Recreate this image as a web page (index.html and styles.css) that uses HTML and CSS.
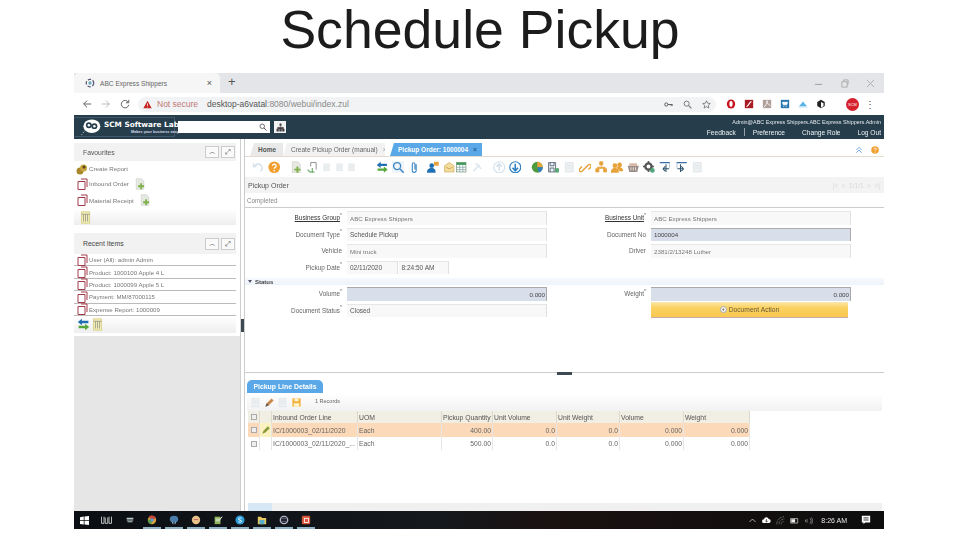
FILE: index.html
```html
<!DOCTYPE html>
<html lang="en">
<head>
<meta charset="utf-8">
<title>Schedule Pickup</title>
<link rel="stylesheet" href="styles.css">
</head>
<body>
<svg class="defs" aria-hidden="true">
  <symbol id="rdoc" viewBox="0 0 12 12"><path d="M2 3.500h7M2 3.500v8h7v-8M5 1h6v8" fill="none" stroke="#a33a4a" stroke-width="1"/></symbol>
  <symbol id="adoc" viewBox="0 0 16 16"><path d="M3 1h7l3 3v11H3z" fill="#e6e9e2" stroke="#cfd3cb"/><path d="M9.500 7v8M5.500 11h8" stroke="#7fb04a" stroke-width="2.400"/></symbol>
  <symbol id="grid" viewBox="0 0 16 16"><path d="M3 1h10v14H3z" fill="#f1edb8" stroke="#d8cf7a"/><path d="M5.500 4v9M8 4v9M10.500 4v9M3 4h10" stroke="#8f8f80" stroke-width=".9"/></symbol>
  <symbol id="sync" viewBox="0 0 16 16"><path d="M1 5l5-4v2.500h8v3H6V9z" fill="#1f6fb2"/><path d="M15 11l-5 4v-2.500H2v-3h8V7z" fill="#55a83a"/></symbol>
  <symbol id="mag" viewBox="0 0 16 16"><circle cx="6.500" cy="6.500" r="4.500" fill="none" stroke="currentColor" stroke-width="1.700"/><path d="M10 10l5 5" stroke="currentColor" stroke-width="2"/></symbol>
  <symbol id="help" viewBox="0 0 16 16"><circle cx="8" cy="8" r="7.500" fill="#f0a030"/><path d="M5.800 6.200a2.300 2.300 0 1 1 3.400 2c-.9.5-1.200.9-1.200 1.800M8 11.500v1.800" fill="none" stroke="#fff" stroke-width="1.600"/></symbol>
  <symbol id="faded" viewBox="0 0 16 16"><path d="M3 2h10v12H3z" fill="#eef1f3" stroke="#dde2e6"/><path d="M5 6h6M5 9h6" stroke="#dde2e6"/></symbol>
  <symbol id="arrow" viewBox="0 0 16 16"><circle cx="8" cy="8" r="7" fill="#fff" stroke="currentColor" stroke-width="1.500"/><path d="M8 3.500v9M4.500 8.500L8 12.500l3.500-4" fill="none" stroke="currentColor" stroke-width="2"/></symbol>
  <symbol id="people" viewBox="0 0 16 16"><circle cx="5" cy="6" r="3" fill="#e8a23a"/><circle cx="11" cy="5" r="3" fill="#e8a23a"/><path d="M0 15c0-5 2-6 5-6s5 1 5 6zM7 8c2-1.500 8-1 9 5h-5z" fill="#e8a23a"/></symbol>
  <symbol id="inout" viewBox="0 0 16 16"><path d="M1 2h13" stroke="#3a6ea8" stroke-width="1.500"/><path d="M13.500 2v7" stroke="#9fb7cf"/><path d="M9 4v10M5 10h8M5 10l3-3M5 10l3 3" fill="none" stroke="#33566f" stroke-width="1.300"/></symbol>
</svg>

<main class="slide">
  <h1 class="slide-title">Schedule Pickup</h1>

  <section class="screen">
    <div class="tabstrip">
      <div class="browser-tab">
        <svg class="fav" viewBox="0 0 12 12"><circle cx="6" cy="6" r="4.500" fill="none" stroke="#557" stroke-width="1.500" stroke-dasharray="4 2"/><circle cx="6" cy="6" r="2" fill="#6ab"/></svg>
        <span class="browser-tab-title">ABC Express Shippers</span>
        <span class="browser-tab-x">×</span>
      </div>
      <span class="new-tab">+</span>
      <div class="win-controls">
        <svg viewBox="0 0 10 10"><path d="M1 6h8" stroke="#999"/></svg>
        <svg viewBox="0 0 10 10"><path d="M2 3h6v6H2zM4 3V1h5v5H8" fill="none" stroke="#aaa"/></svg>
        <svg viewBox="0 0 10 10"><path d="M1 1l8 8M9 1l-8 8" stroke="#aaa"/></svg>
      </div>
    </div>

    <div class="addrbar">
      <div class="nav-btns">
        <svg viewBox="0 0 12 12"><path d="M11 6H2M6 2L2 6l4 4" fill="none" stroke="#666" stroke-width="1.200"/></svg>
        <svg viewBox="0 0 12 12"><path d="M1 6h9M6 2l4 4-4 4" fill="none" stroke="#bbb" stroke-width="1.200"/></svg>
        <svg viewBox="0 0 12 12"><path d="M10 4a4.500 4.500 0 1 0 .5 3M10.500 1v3.500H7" fill="none" stroke="#666" stroke-width="1.200"/></svg>
      </div>
      <div class="omnibox">
        <svg class="warn" viewBox="0 0 12 12"><path d="M6 1l5.500 10H.5z" fill="#c5221f"/><path d="M6 4.500v3.500M6 9v1" stroke="#fff"/></svg>
        <span class="not-secure">Not secure</span>
        <span class="url">desktop-a6vatal<span class="url-dim">:8080/webui/index.zul</span></span>
        <div class="omni-icons">
          <svg viewBox="0 0 14 12"><circle cx="3.500" cy="6" r="2.500" fill="none" stroke="#555" stroke-width="1.400"/><path d="M6 6h7M11 6v2.500M13 6v2" stroke="#555" stroke-width="1.400"/></svg>
          <svg class="mag-gray" viewBox="0 0 16 16"><use href="#mag"/></svg>
          <svg viewBox="0 0 12 12"><path d="M6 1l1.500 3.300 3.500.4-2.600 2.400.7 3.600L6 8.900l-3.100 1.800.7-3.600L1 4.700l3.500-.4z" fill="none" stroke="#666"/></svg>
        </div>
      </div>
      <div class="ext-icons">
        <svg viewBox="0 0 12 12"><ellipse cx="6" cy="6" rx="5" ry="5.500" fill="#c8141e"/><ellipse cx="6" cy="6" rx="2" ry="3.500" fill="#fff"/></svg>
        <svg viewBox="0 0 12 12"><rect x="1" y="1" width="10" height="10" fill="#a81c24"/><path d="M3 9c3 0 3-6 6-6" stroke="#fff" stroke-width="1.500" fill="none"/></svg>
        <svg viewBox="0 0 12 12"><rect x="1" y="1" width="10" height="10" fill="#b0a09c"/><path d="M2 10c3-2 4-5 4-8 0 3 2 5 4 6" stroke="#fff" fill="none"/></svg>
        <svg viewBox="0 0 12 12"><rect x="1" y="1" width="10" height="10" fill="#2a78b0"/><path d="M3 4h6l-1 3H4zM4 9h1M7 9h1" stroke="#fff" fill="#fff"/></svg>
        <svg viewBox="0 0 12 12"><path d="M1 9l5-6 5 6z" fill="#5ab4e6"/><rect x="1" y="9" width="10" height="1.500" fill="#cfe8f6"/></svg>
        <svg viewBox="0 0 12 12"><path d="M6 1l4.500 2.500v5L6 11 1.500 8.500v-5z" fill="#222"/><path d="M6 3.500v7l3-2v-3.500z" fill="#fff"/></svg>
        <span class="profile">SCM</span>
        <span class="kebab">⋮</span>
      </div>
    </div>

    <header class="appbar">
      <div class="logo">
        <svg class="logo-mark" viewBox="0 0 26 20"><ellipse cx="14" cy="9" rx="10" ry="8" fill="#fff"/><circle cx="10.500" cy="8" r="3.500" fill="#263d4c"/><circle cx="17" cy="9" r="3.500" fill="#263d4c"/><circle cx="10.500" cy="8" r="1.500" fill="#fff"/><circle cx="17" cy="9" r="1.500" fill="#fff"/><path d="M2 19l4-5" stroke="#fff" stroke-dasharray="1 1.500"/></svg>
        <div class="logo-text">
          <span class="logo-name">SCM Software Lab</span>
          <span class="logo-tag">Makes your business easy</span>
        </div>
      </div>
      <div class="app-search"><svg viewBox="0 0 16 16"><use href="#mag"/></svg></div>
      <div class="tree-btn"><svg viewBox="0 0 12 12"><path d="M5 1h2v2.500H5zM1 8h2.500v3H1zM4.800 8h2.500v3H4.800zM8.500 8H11v3H8.500zM6 3.500V8M2.200 8V5.800h7.600V8" fill="#444" stroke="#444" stroke-width=".6"/></svg></div>
      <div class="user-area">
        <div class="user-line">Admin@ABC Express Shippers.ABC Express Shippers.Admin</div>
        <nav class="user-links"><span>Feedback</span><i class="pipe"></i><span>Preference</span><span class="link-gap">Change Role</span><span class="link-gap">Log Out</span></nav>
      </div>
    </header>

    <div class="workspace">
      <aside class="sidebar">
        <div class="panels">
          <section class="panel">
            <div class="panel-head"><span>Favourites</span><div class="panel-btns"><b>︿</b><b>⤢</b></div></div>
            <div class="fav-row"><svg class="ic12" viewBox="0 0 12 12"><circle cx="4" cy="8" r="3.500" fill="#a8862c"/><circle cx="7.500" cy="5" r="3.500" fill="#c9a53e"/><circle cx="8" cy="4" r="1.500" fill="#53431a"/></svg><span>Create Report</span></div>
            <div class="fav-row"><svg class="ic12"><use href="#rdoc"/></svg><span>Inbound Order</span><svg class="ic12 after"><use href="#adoc"/></svg></div>
            <div class="fav-row tall"><svg class="ic12"><use href="#rdoc"/></svg><span>Material Receipt</span><svg class="ic12 after"><use href="#adoc"/></svg></div>
            <div class="panel-foot"><svg class="ic13"><use href="#grid"/></svg></div>
          </section>
          <section class="panel">
            <div class="panel-head big"><span>Recent Items</span><div class="panel-btns"><b>︿</b><b>⤢</b></div></div>
            <div class="recent-row"><svg class="ic12"><use href="#rdoc"/></svg><span>User (All): admin Admin</span></div>
            <div class="recent-row"><svg class="ic12"><use href="#rdoc"/></svg><span>Product: 1000100 Apple 4 L</span></div>
            <div class="recent-row"><svg class="ic12"><use href="#rdoc"/></svg><span>Product: 1000099 Apple 5 L</span></div>
            <div class="recent-row"><svg class="ic12"><use href="#rdoc"/></svg><span>Payment: MM/87000115</span></div>
            <div class="recent-row"><svg class="ic12"><use href="#rdoc"/></svg><span>Expense Report: 1000009</span></div>
            <div class="panel-foot short"><svg class="ic13"><use href="#sync"/></svg><svg class="ic13"><use href="#grid"/></svg></div>
          </section>
        </div>
      </aside>

      <div class="splitter"><i class="grip"></i></div>

      <div class="content">
        <div class="upper">
          <div class="doc-tabs">
            <span class="doc-tab home">Home</span>
            <span class="doc-tab create">Create Pickup Order (manual) <em>×</em></span>
            <span class="doc-tab active">Pickup Order: 1000004 <em>×</em></span>
            <div class="doc-tabs-right">
              <svg viewBox="0 0 12 12"><path d="M2 6l4-4 4 4M2 10l4-4 4 4" fill="none" stroke="#5b9bd5" stroke-width="1.300"/></svg>
              <svg viewBox="0 0 16 16"><use href="#help"/></svg>
            </div>
          </div>

          <div class="toolbar">
            <svg viewBox="0 0 16 16"><path d="M11 13a5 5 0 1 0-7-7M2 3v4h4" fill="none" stroke="#d5e2ec" stroke-width="2"/></svg>
            <svg viewBox="0 0 16 16"><use href="#help"/></svg>
            <svg class="sp6" viewBox="0 0 16 16"><use href="#adoc"/></svg>
            <svg viewBox="0 0 16 16"><path d="M6 2h7v9M6 2v5" fill="none" stroke="#777"/><path d="M8 9v6M2 11l3 3h6" fill="none" stroke="#5aa05a" stroke-width="1.300"/></svg>
            <svg class="narrow" viewBox="0 0 16 16"><use href="#faded"/></svg>
            <svg class="narrow" viewBox="0 0 16 16"><use href="#faded"/></svg>
            <svg class="narrow" viewBox="0 0 16 16"><use href="#faded"/></svg>
            <svg class="sp16" viewBox="0 0 16 16"><use href="#sync"/></svg>
            <svg class="mag-blue" viewBox="0 0 16 16"><use href="#mag"/></svg>
            <svg viewBox="0 0 16 16"><path d="M10.500 4v8a2.500 2.500 0 0 1-5 0V4a1.700 1.700 0 0 1 3.400 0v7" fill="none" stroke="#3f88c5" stroke-width="1.400"/></svg>
            <svg class="sp4" viewBox="0 0 16 16"><circle cx="6" cy="6" r="3" fill="#1f6fb2"/><path d="M0 15c0-5 3-6 6-6s5 1 5 6z" fill="#1f6fb2"/><path d="M9 1h6v5H9z" fill="#e8a23a"/></svg>
            <svg viewBox="0 0 16 16"><path d="M2 6l6-4 6 4v8H2z" fill="#f3dca0" stroke="#d2b262"/><path d="M4 8l4 2 4-2" stroke="#c79a3a" fill="none"/></svg>
            <svg class="pull4" viewBox="0 0 16 16"><rect x="2" y="2" width="12" height="12" fill="#fff" stroke="#7f9a7f"/><rect x="2" y="2" width="12" height="3" fill="#3f9a5a"/><path d="M6 5v9M10 5v9M2 8h12M2 11h12" stroke="#8aa"/></svg>
            <svg viewBox="0 0 16 16"><path d="M3 13l8-8M6 3l7 7" stroke="#dde7ee" stroke-width="2"/></svg>
            <svg class="sp6 arrow-faded" viewBox="0 0 16 16"><g transform="rotate(180 8 8)"><use href="#arrow"/></g></svg>
            <svg class="arrow-blue" viewBox="0 0 16 16"><use href="#arrow"/></svg>
            <svg class="sp6" viewBox="0 0 16 16"><circle cx="8" cy="8" r="7" fill="#4e9a3f"/><path d="M8 8V1a7 7 0 0 1 7 7z" fill="#e8a23a"/><path d="M8 8h7a7 7 0 0 1-5 6.700z" fill="#2f7fc1"/></svg>
            <svg viewBox="0 0 16 16"><path d="M2 2h9v12H2z" fill="#eef2f4" stroke="#456"/><path d="M4 2v4h5V2M4 14v-5h5v5" fill="none" stroke="#456"/><circle cx="13" cy="12" r="3" fill="#5aa878"/></svg>
            <svg viewBox="0 0 16 16"><use href="#faded"/></svg>
            <svg viewBox="0 0 16 16"><path d="M7 9l-3 3a2 2 0 0 1-3-3l3-3M9 7l3-3a2 2 0 0 1 3 3l-3 3M5.500 10.500l5-5" transform="translate(0 1)" fill="none" stroke="#e8a23a" stroke-width="1.800"/></svg>
            <svg viewBox="0 0 16 16"><path d="M6 1h4v4H6zM1 10h4v4H1zM11 10h4v4h-4zM8 5v3M3 10V8h10v2" fill="#e8a23a" stroke="#e8a23a"/></svg>
            <svg viewBox="0 0 16 16"><use href="#people"/></svg>
            <svg viewBox="0 0 16 16"><path d="M1 6h14l-2 8H3z" fill="#9a8a84"/><path d="M3 3h10v3H3z" fill="#d8b4a0"/><path d="M5 8v4M8 8v4M11 8v4" stroke="#fff"/></svg>
            <svg viewBox="0 0 16 16"><circle cx="7" cy="7" r="4" fill="none" stroke="#555" stroke-width="3"/><path d="M7 0v3M7 11v3M0 7h3M11 7h3" stroke="#555" stroke-width="2"/><circle cx="12" cy="12" r="3" fill="#4fa478"/></svg>
            <svg viewBox="0 0 16 16"><use href="#inout"/></svg>
            <svg viewBox="0 0 16 16"><g transform="matrix(-1 0 0 1 16 0)"><use href="#inout"/></g></svg>
            <svg viewBox="0 0 16 16"><use href="#faded"/></svg>
          </div>

          <div class="title-row"><span>Pickup Order</span><span class="pager">|&lt;&nbsp; &lt;&nbsp; 1/1/1 &nbsp;&gt;&nbsp; &gt;|</span></div>
          <div class="status-row">Completed</div>

          <div class="form">
            <label class="lbl"><u>Business Group</u><sup>*</sup></label><div class="fld">ABC Express Shippers</div>
            <label class="lbl"><u>Business Unit</u><sup>*</sup></label><div class="fld">ABC Express Shippers</div>
            <label class="lbl">Document Type<sup>*</sup></label><div class="fld dark">Schedule Pickup</div>
            <label class="lbl">Document No</label><div class="fld ro">1000004</div>
            <label class="lbl">Vehicle</label><div class="fld">Mini truck</div>
            <label class="lbl">Driver</label><div class="fld">2381/2/13248 Luther</div>
            <label class="lbl">Pickup Date<sup>*</sup></label><div class="date-pair"><div class="fld dark">02/11/2020</div><div class="fld dark">8:24:50 AM</div></div>
          </div>

          <div class="section-head"><span class="caret"></span>Status</div>

          <div class="form">
            <label class="lbl">Volume<sup>*</sup></label><div class="fld ro num">0.000</div>
            <label class="lbl">Weight<sup>*</sup></label><div class="fld ro num">0.000</div>
            <label class="lbl">Document Status<sup>*</sup></label><div class="fld dark">Closed</div>
            <span></span><button class="doc-action" type="button"><i class="plus">+</i>Document Action</button>
          </div>
        </div>

        <div class="divider"><i class="grip-h"></i></div>

        <div class="lower">
          <div class="sub-tabs"><span class="sub-tab">Pickup Line Details</span></div>
          <div class="grid-tools">
            <svg viewBox="0 0 16 16"><use href="#faded"/></svg>
            <svg viewBox="0 0 16 16"><path d="M2 14l2-5 7-7 3 3-7 7z" fill="#c8884a"/><path d="M2 14l2-5 3 3z" fill="#555"/></svg>
            <svg viewBox="0 0 16 16"><use href="#faded"/></svg>
            <svg viewBox="0 0 16 16"><path d="M2 2h12v12H2z" fill="#f0b03a"/><path d="M5 2h6v4H5zM4 9h8v5H4z" fill="#fff3cf"/></svg>
            <span class="rec-count">1 Records</span>
          </div>
          <div class="grid" role="table">
            <div class="row head" role="row">
              <span class="c check"><i class="box"></i></span><span class="c edit"></span>
              <span class="c line">Inbound Order Line</span><span class="c uom">UOM</span>
              <span class="c qty">Pickup Quantity</span><span class="c uv">Unit Volume</span>
              <span class="c uw">Unit Weight</span><span class="c vol">Volume</span><span class="c wt">Weight</span>
            </div>
            <div class="row sel" role="row">
              <span class="c check"><i class="box"></i></span><span class="c edit"><svg viewBox="0 0 16 16"><path d="M2 14l2-5 7-7 3 3-7 7z" fill="#8a9a3a"/></svg></span>
              <span class="c line">IC/1000003_02/11/2020</span><span class="c uom">Each</span>
              <span class="c qty r">400.00</span><span class="c uv r">0.0</span>
              <span class="c uw r">0.0</span><span class="c vol r">0.000</span><span class="c wt r">0.000</span>
            </div>
            <div class="row" role="row">
              <span class="c check"><i class="box"></i></span><span class="c edit"></span>
              <span class="c line">IC/1000003_02/11/2020_...</span><span class="c uom">Each</span>
              <span class="c qty r">500.00</span><span class="c uv r">0.0</span>
              <span class="c uw r">0.0</span><span class="c vol r">0.000</span><span class="c wt r">0.000</span>
            </div>
          </div>
          <div class="hscroll"><i class="thumb"></i></div>
        </div>
      </div>
    </div>

    <footer class="taskbar">
      <svg class="t-win" viewBox="0 0 12 12"><path d="M0 1.500l5-.7V5.500H0zM6 .7l6-.7v5.500H6zM0 6.500h5v4.700l-5-.7zM6 6.500h6V12l-6-.8z" fill="#fff"/></svg>
      <svg class="t-view" viewBox="0 0 14 12"><path d="M1 2v8h3V2M5.500 3v7h3V3M10 2v8h3V2" fill="none" stroke="#ddd"/></svg>
      <div class="t-apps">
        <span class="t-app"><svg viewBox="0 0 12 12"><path d="M2 4h8M2 6h8M3 8h6" stroke="#bcc" stroke-width="1.300"/></svg></span>
        <span class="t-app on"><svg viewBox="0 0 12 12"><circle cx="6" cy="6" r="5" fill="#d8a03a"/><path d="M6 6L2 2.500A5 5 0 0 1 10.500 4z" fill="#c8443a"/><path d="M6 6l-1 5A5 5 0 0 1 1 5z" fill="#5a9a4a"/><circle cx="6" cy="6" r="2" fill="#5a9ad0"/></svg></span>
        <span class="t-app on"><svg viewBox="0 0 12 12"><ellipse cx="6" cy="5" rx="5" ry="4" fill="#4a7ba8"/><path d="M4 8l1 3M8 8l-1 3" stroke="#9bc" stroke-width="1.200"/></svg></span>
        <span class="t-app on"><svg viewBox="0 0 12 12"><circle cx="6" cy="6" r="5" fill="#e8c48a"/><path d="M3 6c2-2 4 1 6-1" stroke="#b55" fill="none"/></svg></span>
        <span class="t-app on"><svg viewBox="0 0 12 12"><path d="M2 2h7v9H2z" fill="#8fb45a"/><path d="M3 5h5M3 7h5" stroke="#eee"/><path d="M7 7l4-5" stroke="#eee" stroke-width="1.200"/></svg></span>
        <span class="t-app on"><svg viewBox="0 0 12 12"><circle cx="6" cy="6" r="5.500" fill="#2a9ad8"/><path d="M8 4.200C7 3 4 3.200 4 4.800S8 6 8 7.500 5 9 4 8" stroke="#fff" fill="none" stroke-width="1.100"/></svg></span>
        <span class="t-app on"><svg viewBox="0 0 12 12"><path d="M1 2h4l1 1.500h5V11H1z" fill="#e8c860"/><path d="M3 6h6v5H3z" fill="#5ab0c8"/></svg></span>
        <span class="t-app on"><svg viewBox="0 0 12 12"><circle cx="6" cy="6" r="4.500" fill="#223" stroke="#ccd" stroke-width="1.400"/><path d="M1 4h10M1 8h10" stroke="#889" stroke-width=".7"/></svg></span>
        <span class="t-app on"><svg viewBox="0 0 12 12"><rect x="1" y="1" width="10" height="10" rx="1.500" fill="#d8543a"/><rect x="4" y="4" width="5" height="5" fill="none" stroke="#fff"/></svg></span>
      </div>
      <div class="tray">
        <svg viewBox="0 0 12 12"><path d="M2 8l4-4 4 4" fill="none" stroke="#ddd"/></svg>
        <svg viewBox="0 0 14 12"><path d="M3 10a3 3 0 0 1 0-6 4 4 0 0 1 7.500-.5A3.300 3.300 0 0 1 11 10z" fill="#fff"/><path d="M7 4v4M5 6.500L7 8.500l2-2" stroke="#111" fill="none"/></svg>
        <svg viewBox="0 0 12 12"><path d="M1 11a10 10 0 0 1 10-10M4 11a7 7 0 0 1 7-7M7 11a4 4 0 0 1 4-4" fill="none" stroke="#bbb" stroke-dasharray="1 1"/></svg>
        <svg viewBox="0 0 14 12"><path d="M1 3h11v7H1z" fill="none" stroke="#eee"/><path d="M2 4h6v5H2z" fill="#eee"/></svg>
        <svg viewBox="0 0 12 12"><path d="M2 5v3M4 4v5M8 3a5 5 0 0 1 0 7M10 2a7 7 0 0 1 0 9" fill="none" stroke="#999"/></svg>
        <span class="clock">8:26 AM</span>
        <svg class="notif" viewBox="0 0 12 12"><path d="M1 1h10v8H5l-2 2V9H1z" fill="#fff"/><path d="M3 3.500h6M3 6h6" stroke="#111"/></svg>
      </div>
    </footer>
  </section>
</main>
</body>
</html>
```

FILE: styles.css
```css
* { box-sizing: border-box; }
html, body { margin: 0; padding: 0; background: #fff; }
body { font-family: "Liberation Sans", Arial, sans-serif; color: #333; overflow: hidden; }
.defs { display: none; }
svg { display: block; flex: none; }

.slide { width: 960px; height: 540px; display: flex; flex-direction: column; align-items: center; }
.slide-title { margin: 0; height: 73px; font-size: 53.6px; line-height: 58px; font-weight: 400; color: #1c1c1c; }

.screen { width: 810px; height: 456px; margin-right: 2px; display: flex; flex-direction: column; filter: blur(.35px); overflow: hidden; }

/* browser chrome */
.tabstrip { height: 20px; background: #e3e5e8; display: flex; align-items: stretch; flex: none; }
.browser-tab { width: 146px; background: #f6f6f6; display: flex; align-items: center; padding: 0 8px 0 11px; font-size: 6.6px; color: #666; border-radius: 5px 5px 0 0; }
.fav { width: 10px; height: 10px; margin-right: 5px; }
.browser-tab-title { flex: 1; white-space: nowrap; }
.browser-tab-x { font-size: 9px; color: #555; }
.new-tab { margin-left: 8px; font-size: 13px; line-height: 18px; color: #555; }
.win-controls { margin-left: auto; display: flex; align-items: center; gap: 17px; padding-right: 9px; }
.win-controls svg { width: 9px; height: 9px; }

.addrbar { height: 22px; background: #fff; display: flex; align-items: center; flex: none; }
.nav-btns { display: flex; gap: 9px; padding-left: 8px; width: 64px; }
.nav-btns svg { width: 10px; height: 10px; }
.omnibox { width: 578px; height: 15px; background: #f1f3f4; border-radius: 8px; display: flex; align-items: center; padding-left: 5px; white-space: nowrap; }
.warn { width: 9px; height: 9px; margin-right: 5px; }
.not-secure { color: #c07a78; font-size: 8.5px; width: 50px; }
.url { color: #555; font-size: 8.5px; }
.url-dim { color: #8a8a8a; }
.omni-icons { margin-left: auto; display: flex; gap: 10px; padding-right: 5px; align-items: center; }
.omni-icons svg { width: 9px; height: 9px; }
.mag-gray { color: #777; }
.ext-icons { display: flex; align-items: center; gap: 8px; padding-left: 10px; flex: 1; }
.ext-icons svg { width: 10px; height: 10px; }
.profile { width: 13px; height: 13px; border-radius: 50%; background: #d5202e; color: #fff; font-size: 4px; display: flex; align-items: center; justify-content: center; margin-left: 12px; }
.kebab { font-size: 10px; color: #555; margin-left: -2px; }

/* application header */
.appbar { height: 24px; background: #263d4c; display: flex; align-items: center; flex: none; color: #fff; }
.logo { width: 101px; height: 20px; margin: 0 3px 0 0; border: 1px solid #42586a; border-left: 0; display: flex; align-items: center; padding-left: 6px; gap: 2px; }
.logo-mark { width: 22px; height: 18px; }
.logo-text { display: flex; flex-direction: column; align-items: flex-end; }
.logo-name { font: 700 7.3px/10px "DejaVu Sans", sans-serif; white-space: nowrap; }
.logo-tag { font: 700 3.8px/5px "Liberation Sans", sans-serif; white-space: nowrap; color: #dde; }
.app-search { width: 92px; height: 12px; background: #fff; display: flex; justify-content: flex-end; align-items: center; padding-right: 3px; color: #555; }
.app-search svg { width: 8px; height: 8px; }
.tree-btn { width: 12px; height: 12px; margin-left: 4px; background: #f3f3f3; display: flex; align-items: center; justify-content: center; }
.tree-btn svg { width: 9px; height: 9px; }
.user-area { margin-left: auto; padding-right: 3px; text-align: right; display: flex; flex-direction: column; align-items: flex-end; gap: 2px; }
.user-line { font-size: 5.4px; line-height: 8px; color: #e4e9ec; white-space: nowrap; }
.user-links { display: flex; align-items: center; font-size: 6.6px; line-height: 9px; color: #f0f3f5; white-space: nowrap; }
.pipe { width: 1px; height: 8px; background: #8fa0ab; margin: 0 8px; }
.link-gap { margin-left: 17px; }

.workspace { flex: 1; min-height: 0; display: flex; }

/* side panels */
.sidebar { width: 167px; flex: none; background: #e6e6e6; border-right: 1px solid #cfcfcf; }
.panels { background: #fff; padding: 4px 4px 3px 0; display: flex; flex-direction: column; gap: 8px; height: 197px; }
.panel { display: flex; flex-direction: column; }
.panel-head { height: 18px; background: #f2f2f2; display: flex; align-items: center; justify-content: space-between; padding: 0 1px 0 9px; font-size: 6.8px; color: #555; }
.panel-head.big { height: 21px; color: #444; font-size: 6.9px; }
.panel-btns { display: flex; gap: 2px; }
.panel-btns b { width: 14px; height: 12px; border: 1px solid #ccc; background: #fafafa; font: 400 7px/10px "DejaVu Sans", sans-serif; color: #444; text-align: center; }
.fav-row { height: 15px; display: flex; align-items: center; gap: 1px; padding-left: 2px; font-size: 6.2px; color: #777; white-space: nowrap; }
.fav-row.tall { height: 18px; }
.fav-row .after { margin-left: 4px; }
.ic12 { width: 12px; height: 12px; }
.ic13 { width: 13px; height: 13px; }
.panel-foot { height: 16px; display: flex; align-items: center; gap: 1px; padding-left: 5px; background: linear-gradient(#fff, #eee); }
.panel-foot.short { height: 17px; padding-left: 3px; }
.recent-row { height: 12.4px; border-bottom: 1px solid #bbb; display: flex; align-items: center; gap: 1px; padding-left: 2px; font-size: 6.1px; color: #777; white-space: nowrap; }

.splitter { width: 4px; flex: none; background: #fff; border-right: 1px solid #ccc; display: flex; align-items: center; }
.grip { width: 3px; height: 13px; background: #3d4a52; }

/* content */
.content { flex: 1; min-width: 0; display: flex; flex-direction: column; background: #fff; }
.upper { height: 233px; flex: none; display: flex; flex-direction: column; }
.doc-tabs { height: 18px; padding: 4px 0 0 5px; display: flex; align-items: stretch; border-bottom: 1px solid #e1dccb; font-size: 6.5px; white-space: nowrap; flex: none; }
.doc-tab { display: flex; align-items: center; padding: 0 0 0 8px; color: #666; clip-path: polygon(4px 0, 100% 0, 100% 100%, 0 100%); }
.doc-tab.home { width: 33px; background: #e9e9e9; font-weight: 700; color: #555; }
.doc-tab.create { width: 102px; background: #f2f2f2; margin-right: 5px; }
.doc-tab.active { width: 92px; background: #5aa8e8; color: #fff; font-weight: 700; }
.doc-tab em { font-style: normal; margin-left: 5px; color: #999; }
.doc-tab.active em { color: #28619a; }
.doc-tabs-right { margin-left: auto; display: flex; gap: 8px; padding-right: 5px; align-items: center; }
.doc-tabs-right svg { width: 8px; height: 8px; }

.toolbar { height: 20px; display: flex; align-items: center; padding-left: 7px; gap: 3.5px; background: #fff; flex: none; }
.toolbar svg { width: 12.5px; height: 12.5px; }
.toolbar .narrow { width: 9px; }
.toolbar .sp4 { margin-left: 3px; }
.toolbar .sp6 { margin-left: 6px; }
.toolbar .sp16 { margin-left: 16px; }
.toolbar .pull4 { margin-left: -4px; }
.mag-blue { color: #3f88c5; background: #eef4fa; }
.arrow-faded { color: #d5e2ec; }
.arrow-blue { color: #2f7fc1; }

.title-row { height: 16px; background: #f3f3f3; display: flex; align-items: center; justify-content: space-between; padding: 0 4px 0 3px; font-size: 7px; color: #555; flex: none; }
.pager { color: #d8d8d8; font-size: 6.5px; }
.status-row { height: 15px; border-bottom: 1px solid #ccc; display: flex; align-items: center; padding-left: 2px; font-size: 6.3px; color: #888; flex: none; }

.form { display: grid; grid-template-columns: 97px 200px 94px 200px; column-gap: 5px; row-gap: 3px; grid-auto-rows: 13.5px; margin-top: 3px; flex: none; }
.lbl { display: flex; align-items: center; justify-content: flex-end; font-size: 6.4px; color: #666; white-space: nowrap; }
.lbl u { color: #333; }
.lbl sup { font-size: 5px; color: #667; line-height: 0; margin-top: -6px; }
.fld { background: #f8f8f8; border-top: 1px solid #e6e6e6; border-right: 1px solid #e0e0e0; font-size: 6.2px; display: flex; align-items: center; padding: 0 3px; color: #777; white-space: nowrap; }
.fld.dark { color: #555; font-size: 6.5px; }
.fld.ro { background: #d8deea; border-color: #aaa; color: #444; }
.fld.num { justify-content: flex-end; padding-right: 1px; }
.date-pair { display: flex; gap: 1px; width: 102px; }
.date-pair .fld { flex: 1; }
.section-head { height: 7px; margin-top: 4px; background: linear-gradient(#f6f9fd, #eef3fa); display: flex; align-items: center; padding-left: 3px; font-size: 6px; font-weight: 700; color: #444; flex: none; }
.caret { width: 0; height: 0; border: 2.5px solid transparent; border-top: 3.5px solid #556; border-bottom: 0; margin-right: 3px; }
.section-head + .form { margin-top: 2px; }
.doc-action { width: 197px; height: 16px; margin-top: -1.5px; border: 0; padding: 0; background: linear-gradient(#fbe9b0, #fbd262 35%, #f8c850); border-bottom: 1px solid #caa; font: 6.7px "Liberation Sans", sans-serif; color: #6a5a3a; display: flex; align-items: center; justify-content: center; gap: 2px; }
.plus { width: 7px; height: 7px; border-radius: 50%; background: #f4f4f4; border: 1px solid #aaa; font: 700 5px/5px "Liberation Sans", sans-serif; text-align: center; }

.divider { height: 1px; background: #ccc; flex: none; position: relative; }
.grip-h { position: absolute; left: 312px; top: 0; width: 15px; height: 3px; background: #3d4a52; }

.lower { flex: 1; min-height: 0; display: flex; flex-direction: column; padding-left: 2px; background: #fff; }
.sub-tabs { height: 20px; padding-top: 7px; flex: none; display: flex; }
.sub-tab { width: 76px; height: 13px; background: #5aa8e8; color: #fff; font-size: 6.9px; line-height: 13px; font-weight: 700; text-align: center; border-radius: 5px 5px 0 0; white-space: nowrap; }
.grid-tools { height: 18px; display: flex; align-items: center; gap: 2.5px; padding-left: 3px; background: linear-gradient(#fff, #f2f2f2); flex: none; margin-right: 2px; }
.grid-tools svg { width: 11px; height: 11px; }
.rec-count { font-size: 5.5px; color: #666; margin-left: 11px; margin-top: -3px; }
.grid { flex: 1; min-height: 0; padding-left: 1px; }
.row { display: flex; width: 502px; height: 13px; font-size: 6.8px; color: #666; }
.row.head { height: 12px; background: #f1eee3; color: #555; }
.row.sel { height: 14px; background: #fcd9b8; }
.c { display: flex; align-items: center; padding: 0 1px; border-right: 1px solid #dfdbcc; white-space: nowrap; overflow: hidden; }
.c.r { justify-content: flex-end; border-right-color: #eee; }
.row:not(.head) .c { border-right-color: #e6e6e6; }
.check { width: 12px; justify-content: center; }
.edit { width: 12px; justify-content: center; }
.sel .edit { background: #fbf2c0; }
.edit svg { width: 10px; height: 10px; }
.box { width: 6px; height: 6px; border: 1px solid #aaa; background: #eee; }
.line { width: 86px; }
.uom { width: 84px; }
.qty { width: 51px; }
.uv { width: 64px; }
.uw { width: 63px; }
.vol { width: 64px; }
.wt { width: 66px; }
.hscroll { height: 8px; margin: 0 2px 0 1px; background: #f0f0f0; flex: none; }
.thumb { display: block; width: 24px; height: 8px; background: #d6e8f5; }

/* windows taskbar */
.taskbar { height: 18px; background: linear-gradient(90deg, #0b0f14, #15181c 45%, #1a1010 60%, #0e0e0e); display: flex; align-items: center; flex: none; color: #eee; }
.t-win { width: 9px; height: 9px; margin-left: 6px; }
.t-view { width: 13px; height: 10px; margin-left: 11px; }
.t-apps { display: flex; margin-left: 6px; height: 18px; }
.t-app { width: 18px; height: 18px; margin: 0 2px; display: flex; align-items: center; justify-content: center; border-bottom: 2px solid transparent; padding-top: 1px; }
.t-app.on { border-bottom-color: #8fb2c4; }
.t-app svg { width: 10px; height: 10px; }
.tray { margin-left: auto; display: flex; align-items: center; gap: 5px; padding-right: 13px; }
.tray svg { width: 9px; height: 9px; }
.clock { font-size: 7px; color: #e6e6e6; margin: 0 6px 0 3px; white-space: nowrap; }
.tray .notif { width: 10px; height: 10px; margin-left: 3px; }
```
